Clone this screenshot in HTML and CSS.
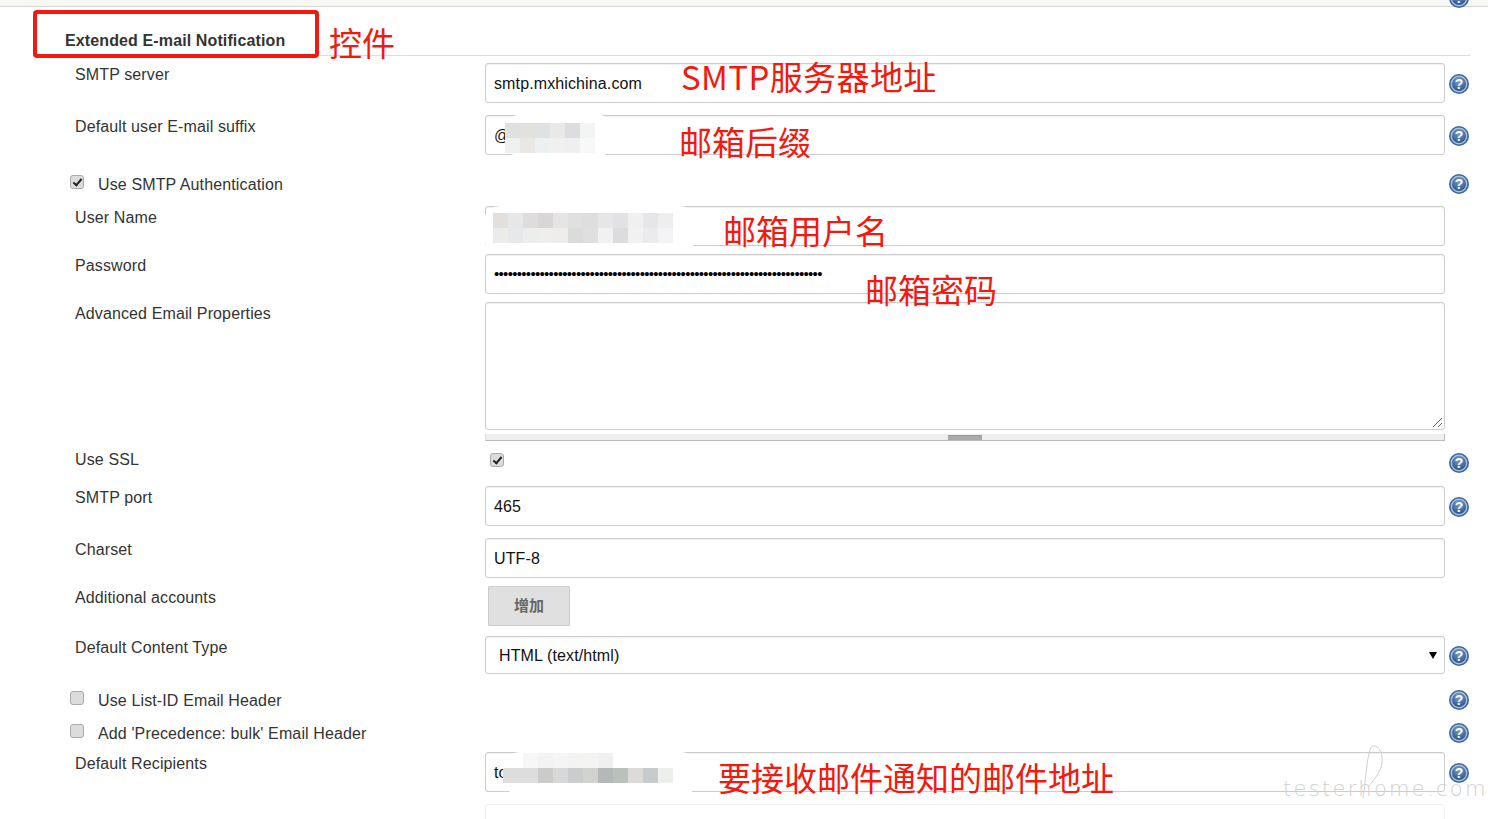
FILE: index.html
```html
<!DOCTYPE html>
<html lang="en">
<head>
    <meta charset="UTF-8">
    <title>Extended E-mail Notification</title>
    <link rel="stylesheet" href="styles.css">
</head>
<body>
    <svg class="defs" width="0" height="0">
        <defs>
            <radialGradient id="help-fill" cx="50%" cy="30%" r="75%">
                <stop offset="0" stop-color="#7fa0cb"/>
                <stop offset="1" stop-color="#214f8e"/>
            </radialGradient>
            <symbol id="help" viewBox="0 0 20 20">
                <circle cx="10" cy="10" r="10" fill="#3a659f"/>
                <circle cx="10" cy="10" r="8.4" fill="#a9c0dd"/>
                <circle cx="10" cy="10" r="7" fill="url(#help-fill)"/>
                <text x="10" y="15" text-anchor="middle" class="help-mark">?</text>
            </symbol>
        </defs>
    </svg>

    <div class="topbar">
        <svg class="help help-top"><use href="#help"/></svg>
    </div>

    <div class="page">
        <div class="section-title">Extended E-mail Notification</div>

        <div class="row gap-7">
            <label class="label">SMTP server</label>
            <div class="field"><div class="input">smtp.mxhichina.com</div></div>
            <svg class="help"><use href="#help"/></svg>
        </div>
        <div class="row gap-12">
            <label class="label">Default user E-mail suffix</label>
            <div class="field"><div class="input">@</div></div>
            <svg class="help"><use href="#help"/></svg>
        </div>
        <div class="row check-row gap-17">
            <label class="check-label"><span class="check checked"></span>Use SMTP Authentication</label>
            <svg class="help"><use href="#help"/></svg>
        </div>
        <div class="row gap-10">
            <label class="label">User Name</label>
            <div class="field"><div class="input"></div></div>
        </div>
        <div class="row gap-8">
            <label class="label">Password</label>
            <div class="field"><div class="input password">••••••••••••••••••••••••••••••••••••••••••••••••••••••••••••••••••••••••</div></div>
        </div>
        <div class="row gap-8">
            <label class="label">Advanced Email Properties</label>
            <div class="field">
                <div class="input textarea">
                    <svg class="resize" width="11" height="11" viewBox="0 0 11 11"><path d="M1 10 10 1M6 10l4-4" stroke="#666" fill="none"/></svg>
                </div>
                <div class="grip"><span class="grip-handle"></span></div>
            </div>
        </div>
        <div class="row check-row gap-7">
            <label class="label">Use SSL</label>
            <div class="field"><span class="check checked check-inline"></span></div>
            <svg class="help help-low"><use href="#help"/></svg>
        </div>
        <div class="row gap-14">
            <label class="label">SMTP port</label>
            <div class="field"><div class="input">465</div></div>
            <svg class="help"><use href="#help"/></svg>
        </div>
        <div class="row gap-12">
            <label class="label">Charset</label>
            <div class="field"><div class="input">UTF-8</div></div>
        </div>
        <div class="row gap-8">
            <label class="label">Additional accounts</label>
            <div class="field"><button class="add-btn">增加</button></div>
        </div>
        <div class="row gap-10">
            <label class="label">Default Content Type</label>
            <div class="field"><div class="input select">HTML (text/html)<span class="arrow"></span></div></div>
            <svg class="help help-select"><use href="#help"/></svg>
        </div>
        <div class="row check-row gap-14">
            <label class="check-label"><span class="check"></span>Use List-ID Email Header</label>
            <svg class="help"><use href="#help"/></svg>
        </div>
        <div class="row check-row gap-9">
            <label class="check-label"><span class="check"></span>Add 'Precedence: bulk' Email Header</label>
            <svg class="help"><use href="#help"/></svg>
        </div>
        <div class="row gap-7">
            <label class="label">Default Recipients</label>
            <div class="field"><div class="input">to</div></div>
            <svg class="help"><use href="#help"/></svg>
        </div>
        <div class="row row-faded gap-12">
            <div class="field"><div class="input"></div></div>
        </div>
    </div>

    <!-- blurred-out values, painted over the inputs -->
    <svg class="mask mask-suffix" width="108" height="46" viewBox="0 0 108 46">
        <rect x="0" y="0" width="108" height="46" rx="20" fill="#fff"/>
        <rect x="0" y="10" width="15" height="15" fill="#dfe0e2"/>
        <rect x="15" y="10" width="15" height="15" fill="#e3e1de"/>
        <rect x="30" y="10" width="15" height="15" fill="#dfe2e5"/>
        <rect x="45" y="10" width="15" height="15" fill="#e9e9e7"/>
        <rect x="60" y="10" width="15" height="15" fill="#dcdde0"/>
        <rect x="75" y="10" width="15" height="15" fill="#f3f4f4"/>
        <rect x="0" y="25" width="15" height="15" fill="#eff0f0"/>
        <rect x="15" y="25" width="15" height="15" fill="#e9e8e4"/>
        <rect x="30" y="25" width="15" height="15" fill="#edf0f1"/>
        <rect x="45" y="25" width="15" height="15" fill="#f0f0f0"/>
        <rect x="60" y="25" width="15" height="15" fill="#efefef"/>
        <rect x="75" y="25" width="15" height="15" fill="#f8f8f8"/>
    </svg>
    <svg class="mask mask-user" width="214" height="47" viewBox="0 0 214 47">
        <rect x="0" y="0" width="214" height="47" rx="18" fill="#fff"/>
        <rect x="10" y="7" width="15" height="15" fill="#e2dfdc"/>
        <rect x="25" y="7" width="15" height="15" fill="#e6e7e8"/>
        <rect x="40" y="7" width="15" height="15" fill="#dedddc"/>
        <rect x="55" y="7" width="15" height="15" fill="#d8d6d6"/>
        <rect x="70" y="7" width="15" height="15" fill="#e6e5e3"/>
        <rect x="85" y="7" width="15" height="15" fill="#e0e0e0"/>
        <rect x="100" y="7" width="15" height="15" fill="#dfdddd"/>
        <rect x="115" y="7" width="15" height="15" fill="#e6e6e8"/>
        <rect x="130" y="7" width="15" height="15" fill="#e2e2e4"/>
        <rect x="145" y="7" width="15" height="15" fill="#f0f0f1"/>
        <rect x="160" y="7" width="15" height="15" fill="#e6e6e8"/>
        <rect x="175" y="7" width="15" height="15" fill="#eeeeee"/>
        <rect x="10" y="22" width="15" height="15" fill="#ebebe8"/>
        <rect x="25" y="22" width="15" height="15" fill="#e7e8e9"/>
        <rect x="40" y="22" width="15" height="15" fill="#eceded"/>
        <rect x="55" y="22" width="15" height="15" fill="#eeeeec"/>
        <rect x="70" y="22" width="15" height="15" fill="#eeedeb"/>
        <rect x="85" y="22" width="15" height="15" fill="#dadcdb"/>
        <rect x="100" y="22" width="15" height="15" fill="#dfdfdf"/>
        <rect x="115" y="22" width="15" height="15" fill="#f1f1f1"/>
        <rect x="130" y="22" width="15" height="15" fill="#dcdcde"/>
        <rect x="145" y="22" width="15" height="15" fill="#f1f1f2"/>
        <rect x="160" y="22" width="15" height="15" fill="#ebebed"/>
        <rect x="175" y="22" width="15" height="15" fill="#f4f4f6"/>
    </svg>
    <svg class="mask mask-recipients" width="195" height="44" viewBox="0 0 195 44">
        <rect x="0" y="0" width="195" height="44" rx="18" fill="#fff"/>
        <rect x="20" y="1" width="15" height="15" fill="#f7f7f7"/>
        <rect x="35" y="1" width="15" height="15" fill="#f3f3f3"/>
        <rect x="50" y="1" width="15" height="15" fill="#f5f5f5"/>
        <rect x="65" y="1" width="15" height="15" fill="#f3f3f3"/>
        <rect x="80" y="1" width="15" height="15" fill="#f4f4f2"/>
        <rect x="95" y="1" width="15" height="15" fill="#f0f0f0"/>
        <rect x="0" y="16" width="35" height="15" fill="#dcdddc"/>
        <rect x="35" y="16" width="15" height="15" fill="#cbcbc9"/>
        <rect x="50" y="16" width="15" height="15" fill="#d8d8d8"/>
        <rect x="65" y="16" width="15" height="15" fill="#cbccce"/>
        <rect x="80" y="16" width="15" height="15" fill="#d2d3ce"/>
        <rect x="95" y="16" width="15" height="15" fill="#b3b8b8"/>
        <rect x="110" y="16" width="15" height="15" fill="#b9c1bb"/>
        <rect x="125" y="16" width="15" height="15" fill="#dcdbd9"/>
        <rect x="140" y="16" width="15" height="15" fill="#c6cbcd"/>
        <rect x="155" y="16" width="15" height="15" fill="#edefec"/>
    </svg>

    <!-- red notes drawn on top of the screenshot -->
    <div class="note-box"></div>
    <span class="note note-control">控件</span>
    <span class="note note-smtp">SMTP服务器地址</span>
    <span class="note note-suffix">邮箱后缀</span>
    <span class="note note-user">邮箱用户名</span>
    <span class="note note-pass">邮箱密码</span>
    <span class="note note-to">要接收邮件通知的邮件地址</span>

    <div class="watermark">
        testerhome.com
        <svg class="flourish" width="30" height="56" viewBox="0 0 30 56"><path d="M5 53C8 36 9 2 15 1c7-1 10 9 9 17-1 9-9 18-14 24" fill="none" stroke="#cfcfcf" stroke-width="1"/></svg>
    </div>
</body>
</html>
```

FILE: styles.css
```css
html, body {
    margin: 0;
    padding: 0;
    height: 819px;
    overflow: hidden;
    background-color: #fff;
}
body {
    font-family: "Liberation Sans", Arial, sans-serif;
    font-size: 16px;
    color: #333;
    position: relative;
}
.defs {
    position: absolute;
}
.topbar {
    height: 6px;
    background-color: #f7f8f3;
    border-bottom: 1px solid #d3d5cf;
}
.page {
    padding-right: 18px;
}
.section-title {
    margin-left: 65px;
    height: 48px;
    line-height: 68px;
    font-weight: bold;
    letter-spacing: 0.12px;
    border-bottom: 1px solid #ddd;
}
.row {
    display: flex;
    padding-left: 75px;
    position: relative;
}
.gap-7 { margin-top: 7px; }
.gap-8 { margin-top: 8px; }
.gap-9 { margin-top: 9px; }
.gap-10 { margin-top: 10px; }
.gap-12 { margin-top: 12px; }
.gap-14 { margin-top: 14px; }
.gap-17 { margin-top: 17px; }
.label {
    width: 410px;
    flex: none;
    line-height: 24px;
    letter-spacing: 0.12px;
}
.check-row .label {
    line-height: 26px;
}
.field {
    width: 960px;
    flex: none;
}
.input {
    box-sizing: border-box;
    height: 40px;
    padding: 0 8px;
    line-height: 40px;
    letter-spacing: 0.12px;
    color: #111;
    background-color: #fff;
    border: 1px solid #ccc;
    border-radius: 3px;
    box-shadow: inset 0 1px 1px #f0f0f0;
    position: relative;
}
.password {
    font-size: 15px;
    letter-spacing: -0.7px;
    line-height: 37px;
    white-space: nowrap;
    color: #000;
}
.textarea {
    height: 128px;
}
.resize {
    position: absolute;
    right: 1px;
    bottom: 1px;
}
.grip {
    margin-top: 4px;
    height: 6px;
    background-color: #eee;
    border-bottom: 1px solid #bbb;
    border-left: 1px solid #ddd;
    border-right: 1px solid #bbb;
}
.grip-handle {
    display: block;
    margin: 0 auto;
    padding-top: 2px;
    width: 34px;
    height: 2px;
    background-color: #aaa;
    border-top: 1px solid #999;
    position: relative;
    top: 1px;
}
.check-row {
    height: 24px;
    align-items: center;
}
.check-label {
    width: 1375px;
    flex: none;
    margin-left: -5px;
    display: flex;
    align-items: center;
    padding-top: 2px;
    box-sizing: border-box;
    letter-spacing: 0.13px;
}
.check {
    box-sizing: border-box;
    width: 14px;
    height: 14px;
    margin-right: 14px;
    margin-top: -6px;
    flex: none;
    display: block;
    background-color: #dcdcdc;
    border: 1px solid #aaa;
    border-radius: 3px;
    position: relative;
}
.checked::after {
    content: "";
    position: absolute;
    left: 4px;
    top: 1px;
    width: 3px;
    height: 7px;
    border: solid #222;
    border-width: 0 2px 2px 0;
    transform: rotate(40deg);
}
.check-inline {
    margin-left: 5px;
    margin-top: 0;
}
.add-btn {
    display: block;
    margin-left: 3px;
    width: 82px;
    height: 40px;
    padding: 0 0 3px;
    font-family: "Liberation Sans", "Noto Sans CJK SC", sans-serif;
    font-size: 15px;
    font-weight: bold;
    color: #666;
    background-color: #e0e0e0;
    border: 1px solid #ccc;
    border-radius: 1px;
}
.select {
    height: 38px;
    line-height: 37px;
    padding-left: 13px;
}
.arrow {
    position: absolute;
    right: 7px;
    top: 15px;
    border-left: 4px solid transparent;
    border-right: 4px solid transparent;
    border-top: 7px solid #000;
}
.row-faded .input {
    border-color: #f2f2f2;
    box-shadow: none;
}
.row-faded .field {
    margin-left: 410px;
}
.help {
    width: 20px;
    height: 20px;
    flex: none;
    margin-left: 4px;
    margin-top: 11px;
}
.check-row .help {
    margin-top: 0;
}
.check-row .help-low {
    margin-top: 6px;
}
.help-select {
    margin-top: 10px;
}
.help-mark {
    font-family: "Liberation Sans", sans-serif;
    font-size: 14px;
    font-weight: bold;
    fill: #fff;
}
.help-top {
    position: absolute;
    left: 1449px;
    top: -12px;
    margin: 0;
}
.mask {
    position: absolute;
}
.mask-suffix { left: 505px; top: 113px; }
.mask-user { left: 483px; top: 206px; }
.mask-recipients { left: 503px; top: 752px; }
.note-box {
    position: absolute;
    left: 33px;
    top: 10px;
    width: 278px;
    height: 40px;
    border: 4px solid #f8170f;
    border-radius: 4px;
}
.note {
    position: absolute;
    font-family: "Noto Sans CJK SC", sans-serif;
    font-size: 33px;
    line-height: 40px;
    color: #f5180e;
    white-space: nowrap;
}
.note-control { left: 329px; top: 22px; }
.note-smtp { left: 681px; top: 56px; letter-spacing: 0.4px; }
.note-suffix { left: 679px; top: 121px; }
.note-user { left: 723px; top: 210px; }
.note-pass { left: 865px; top: 269px; }
.note-to { left: 718px; top: 757px; }
.watermark {
    position: absolute;
    left: 1283px;
    top: 774px;
    font-family: "DejaVu Sans", sans-serif;
    font-size: 21px;
    font-weight: 200;
    line-height: 30px;
    letter-spacing: 2.3px;
    color: #cfcfcf;
    white-space: nowrap;
}
.flourish {
    position: absolute;
    left: 75px;
    top: -29px;
}
```
